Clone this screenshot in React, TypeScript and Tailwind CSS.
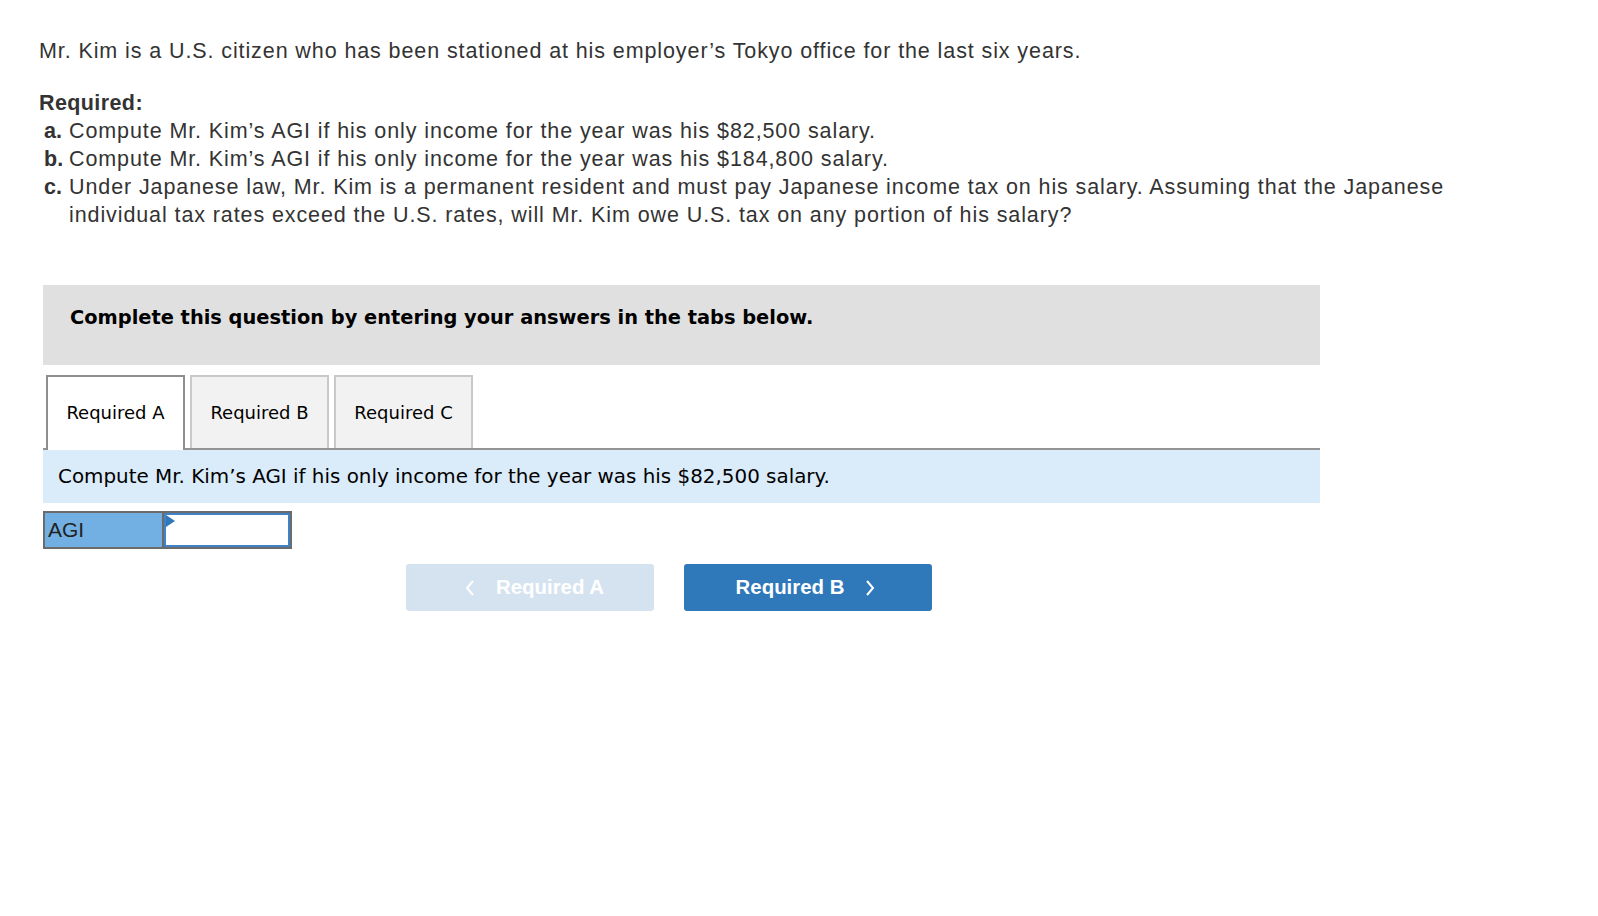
import React from "react";

const body = { fontFamily: "'Liberation Sans', Arial, sans-serif" };

export default function App() {
  return (
    <div className="min-h-[916px] w-full bg-white text-[#222]">
      <div className="pl-[39px] pt-[37px] text-[21.5px] leading-[28px] tracking-[0.9px] text-[#333]" style={body}>
        <p>Mr. Kim is a U.S. citizen who has been stationed at his employer’s Tokyo office for the last six years.</p>
        <p className="mt-[24px] font-bold tracking-[0.4px]">Required:</p>
        <ul className="pl-[5px]">
          <li className="flex">
            <span className="w-[25px] shrink-0 font-bold tracking-normal">a.</span>
            <span>Compute Mr. Kim’s AGI if his only income for the year was his $82,500 salary.</span>
          </li>
          <li className="flex">
            <span className="w-[25px] shrink-0 font-bold tracking-normal">b.</span>
            <span>Compute Mr. Kim’s AGI if his only income for the year was his $184,800 salary.</span>
          </li>
          <li className="flex">
            <span className="w-[25px] shrink-0 font-bold tracking-normal">c.</span>
            <span className="max-w-[1410px]">
              Under Japanese law, Mr. Kim is a permanent resident and must pay Japanese income tax on his salary. Assuming that the Japanese individual tax rates exceed the U.S. rates, will Mr. Kim owe U.S. tax on any portion of his salary?
            </span>
          </li>
        </ul>
      </div>

      <div className="ml-[43px] mt-[56px] w-[1277px]" style={{ fontFamily: "'DejaVu Sans', Verdana, sans-serif" }}>
        <div className="h-[80px] bg-[#e0e0e0] pl-[27px] pt-[20px] text-[19.4px] font-bold leading-[26px] text-black">
          Complete this question by entering your answers in the tabs below.
        </div>

        <div className="mt-[11px] flex h-[74px] items-end gap-[5px] border-b-2 border-[#949494] pl-[3px] text-[18px]">
          <div className="relative -mb-[2px] flex h-[75px] w-[139px] items-center justify-center border-2 border-b-0 border-[#8e8e8e] bg-white pb-[2px] text-black">
            Required A
          </div>
          <div className="flex h-[73px] w-[139px] items-center justify-center border-2 border-b-0 border-[#c9c9c9] bg-[#f2f2f2] text-black">
            Required B
          </div>
          <div className="flex h-[73px] w-[139px] items-center justify-center border-2 border-b-0 border-[#c9c9c9] bg-[#f2f2f2] text-black">
            Required C
          </div>
        </div>

        <div className="flex h-[53px] items-center bg-[#daebf9] pl-[15px] text-[19.9px] text-black">
          Compute Mr. Kim’s AGI if his only income for the year was his $82,500 salary.
        </div>

        <div className="mt-[8px] flex h-[38px] w-[249px] border-2 border-[#6b6b6b]" style={body}>
          <div className="flex w-[119px] items-center border-r-2 border-[#6b6b6b] bg-[#72b0e3] pl-[3px] text-[21px] text-[#222]">
            AGI
          </div>
          <div className="relative flex-1 border-2 border-[#3f82c6] bg-white">
            <svg className="absolute left-0 top-0" width="9" height="12" viewBox="0 0 9 12">
              <polygon points="0,0 9,6 0,12" fill="#2f78b9" />
            </svg>
          </div>
        </div>

        <div className="mt-[15px] flex gap-[30px] pl-[363px]" style={body}>
          <div className="flex h-[47px] w-[248px] items-center justify-center gap-[21px] rounded-[3px] bg-[#d5e3f1] pl-[9px] text-[20.4px] font-bold text-white">
            <svg width="10" height="16" viewBox="0 0 10 16" fill="none" stroke="white" strokeWidth="2">
              <polyline points="8,1 2,8 8,15" />
            </svg>
            <span>Required A</span>
          </div>
          <div className="flex h-[47px] w-[248px] items-center justify-center gap-[21px] rounded-[3px] bg-[#2f78b9] pr-[5px] text-[20.4px] font-bold text-white">
            <span>Required B</span>
            <svg width="10" height="16" viewBox="0 0 10 16" fill="none" stroke="white" strokeWidth="2">
              <polyline points="2,1 8,8 2,15" />
            </svg>
          </div>
        </div>
      </div>
    </div>
  );
}
